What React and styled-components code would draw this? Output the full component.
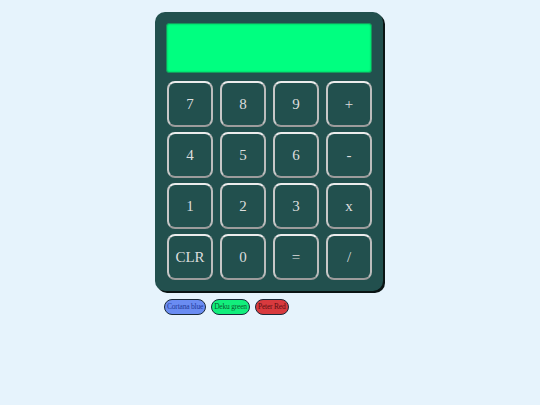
import React from "react";
import styled, { createGlobalStyle } from "styled-components";

const Global = createGlobalStyle`
  html, body {
    margin: 0;
    padding: 0;
    background: #e6f3fc;
    font-family: "Liberation Serif", "Times New Roman", serif;
  }
`;

const Page = styled.div`
  width: 230px;
  margin: 0 auto;
  padding-top: 12px;
`;

const Calculator = styled.div`
  box-sizing: border-box;
  width: 228px;
  padding: 11px;
  background: #22504e;
  border-radius: 10px;
  box-shadow: 2px 2px 0 #0a1414;
  display: flex;
  flex-direction: column;
  gap: 8px;
`;

const Display = styled.div`
  box-sizing: border-box;
  width: 206px;
  height: 50px;
  background: #00ff80;
  border: 1px solid #139a5c;
  border-radius: 3px;
  box-shadow: inset 0 0 2px rgba(0, 90, 40, 0.5);
`;

const Keypad = styled.div`
  display: grid;
  grid-template-columns: repeat(4, 46px);
  grid-auto-rows: 46px;
  column-gap: 7px;
  row-gap: 5px;
  padding-left: 1px;
`;

const Key = styled.button`
  box-sizing: border-box;
  margin: 0;
  padding: 0;
  background: transparent;
  border: 2px solid;
  border-color: #ececec #bcbcbc #9c9c9c #c8c8c8;
  border-radius: 8px;
  color: #dedede;
  font-family: "Liberation Serif", "Times New Roman", serif;
  font-size: 15px;
  display: flex;
  align-items: center;
  justify-content: center;
`;

const Themes = styled.div`
  display: flex;
  gap: 5px;
  margin-top: 8px;
  padding-left: 9px;
`;

const Pill = styled.button`
  box-sizing: border-box;
  height: 16px;
  padding: 0 2px;
  margin: 0;
  border: 1px solid #1a2a3a;
  border-radius: 8px;
  background: ${(p) => p.$bg};
  color: ${(p) => p.$fg};
  font-family: "Liberation Serif", "Times New Roman", serif;
  font-size: 7.5px;
  letter-spacing: -0.2px;
  line-height: 14px;
  white-space: nowrap;
`;

const keys = ["7", "8", "9", "+", "4", "5", "6", "-", "1", "2", "3", "x", "CLR", "0", "=", "/"];

const themes = [
  { label: "Cortana blue", bg: "#6a8cf2", fg: "#1e3a9a" },
  { label: "Deku green", bg: "#12ee7c", fg: "#0b5b30" },
  { label: "Peter Red", bg: "#d83a3e", fg: "#5a1012" },
];

export default function App() {
  return (
    <>
      <Global />
      <Page>
        <Calculator>
          <Display />
          <Keypad>
            {keys.map((k) => (
              <Key key={k}>{k}</Key>
            ))}
          </Keypad>
        </Calculator>
        <Themes>
          {themes.map((t) => (
            <Pill key={t.label} $bg={t.bg} $fg={t.fg}>
              {t.label}
            </Pill>
          ))}
        </Themes>
      </Page>
    </>
  );
}
